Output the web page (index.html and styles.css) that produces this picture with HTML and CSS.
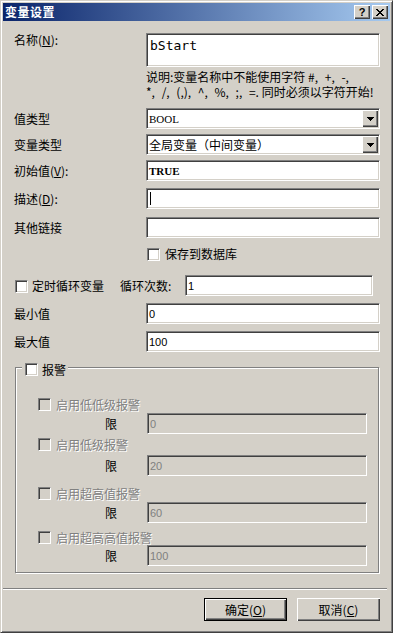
FILE: index.html
```html
<!DOCTYPE html>
<html lang="zh">
<head>
<meta charset="utf-8">
<title>变量设置</title>
<link rel="stylesheet" href="styles.css">
</head>
<body>
<div class="window">
  <div class="titlebar">
    <span class="title">变量设置</span>
    <div class="tbtns">
      <span class="tbtn help">?</span>
      <span class="tbtn close"><svg width="8" height="7" viewBox="0 0 8 7" shape-rendering="crispEdges"><path d="M0 0h2v1H0z M6 0h2v1H6z M1 1h2v1H1z M5 1h2v1H5z M2 2h4v1H2z M3 3h2v1H3z M2 4h4v1H2z M1 5h2v1H1z M5 5h2v1H5z M0 6h2v1H0z M6 6h2v1H6z" fill="#000"/></svg></span>
    </div>
  </div>
  <div class="client">
    <div class="row row-name">
      <span class="lbl">名称(<u>N</u>):</span>
      <div class="edit edit-name">bStart</div>
    </div>
    <div class="note">
      <div class="note-line">说明:变量名称中不能使用字符 <span class="ascii">#, +, -,</span></div>
      <div class="note-line"><span class="ascii">*, /, (,), ^, %, ;, =.</span> 同时必须以字符开始!</div>
    </div>

    <div class="row r-valtype">
      <span class="lbl">值类型</span>
      <div class="combo">
        <span class="combo-text serif">BOOL</span>
        <span class="combo-btn"><svg width="7" height="4" viewBox="0 0 7 4" shape-rendering="crispEdges"><path d="M0 0h7v1H0z M1 1h5v1H1z M2 2h3v1H2z M3 3h1v1H3z" fill="#000"/></svg></span>
      </div>
    </div>
    <div class="row r-vartype">
      <span class="lbl">变量类型</span>
      <div class="combo">
        <span class="combo-text">全局变量（中间变量）</span>
        <span class="combo-btn"><svg width="7" height="4" viewBox="0 0 7 4" shape-rendering="crispEdges"><path d="M0 0h7v1H0z M1 1h5v1H1z M2 2h3v1H2z M3 3h1v1H3z" fill="#000"/></svg></span>
      </div>
    </div>
    <div class="row r-init">
      <span class="lbl">初始值(<u>V</u>):</span>
      <div class="edit serif bold">TRUE</div>
    </div>
    <div class="row r-desc">
      <span class="lbl">描述(<u>D</u>):</span>
      <div class="edit"><span class="caret"></span></div>
    </div>
    <div class="row r-link">
      <span class="lbl">其他链接</span>
      <div class="edit"></div>
    </div>
    <div class="row r-save">
      <span class="cb"></span>
      <span class="cb-text">保存到数据库</span>
    </div>
    <div class="row r-timer">
      <span class="cb"></span>
      <span class="cb-text timer-text">定时循环变量</span>
      <span class="count-lbl">循环次数:</span>
      <div class="edit edit-count">1</div>
    </div>
    <div class="row r-min">
      <span class="lbl">最小值</span>
      <div class="edit">0</div>
    </div>
    <div class="row r-max">
      <span class="lbl">最大值</span>
      <div class="edit">100</div>
    </div>

    <div class="group">
      <div class="group-title">
        <span class="cb"></span>
        <span>报警</span>
      </div>
      <div class="g-check gc1"><span class="cb dis"></span><span class="dis-text">启用低低级报警</span></div>
      <div class="g-limit gl1"><span class="lim">限</span><div class="edit dis-edit">0</div></div>
      <div class="g-check gc2"><span class="cb dis"></span><span class="dis-text">启用低级报警</span></div>
      <div class="g-limit gl2"><span class="lim">限</span><div class="edit dis-edit">20</div></div>
      <div class="g-check gc3"><span class="cb dis"></span><span class="dis-text">启用超高值报警</span></div>
      <div class="g-limit gl3"><span class="lim">限</span><div class="edit dis-edit">60</div></div>
      <div class="g-check gc4"><span class="cb dis"></span><span class="dis-text">启用超高高值报警</span></div>
      <div class="g-limit gl4"><span class="lim">限</span><div class="edit dis-edit">100</div></div>
    </div>

    <div class="separator"></div>

    <div class="buttons">
      <span class="btn btn-default">确定(<u>O</u>)</span>
      <span class="btn">取消(<u>C</u>)</span>
    </div>
  </div>
</div>
</body>
</html>
```

FILE: styles.css
```css
* { box-sizing: border-box; }
html, body { margin: 0; padding: 0; }
body {
  width: 393px;
  height: 633px;
  overflow: hidden;
  background: #d4d0c8;
  font-family: "Noto Sans CJK SC", "Noto Sans", sans-serif;
  font-size: 12px;
  color: #000;
}
u { text-decoration: underline; text-underline-offset: 1px; }

.window {
  width: 393px;
  height: 633px;
  background: #d4d0c8;
  border: 1px solid;
  border-color: #d4d0c8 #404040 #404040 #d4d0c8;
  box-shadow: inset 1px 1px #fff, inset -1px -1px #808080;
  padding: 2px;
  display: flex;
  flex-direction: column;
}

.titlebar {
  height: 18px;
  flex: none;
  display: flex;
  align-items: center;
  justify-content: space-between;
  background: linear-gradient(to right, #0a246a 0%, #a6caf0 100%);
  padding: 0 2px 0 2px;
}
.title {
  color: #fff;
  font-weight: bold;
  font-size: 12px;
  line-height: 18px;
  letter-spacing: 0.5px;
}
.tbtns { display: flex; gap: 2px; }
.tbtn {
  width: 16px;
  height: 14px;
  background: #d4d0c8;
  box-shadow: inset 1px 1px #fff, inset -1px -1px #404040, inset -2px -2px #808080;
  display: flex;
  align-items: center;
  justify-content: center;
}
.help {
  font-family: "Liberation Sans", sans-serif;
  font-weight: bold;
  font-size: 11px;
  line-height: 14px;
}

.client {
  flex: 1;
  display: flex;
  flex-direction: column;
  padding: 0 10px 0 11px;
}

.row { display: flex; align-items: center; flex: none; }
.lbl { width: 132px; flex: none; line-height: 14px; }

.edit {
  width: 234px;
  height: 21px;
  flex: none;
  background: #fff;
  border: 1px solid;
  border-color: #808080 #fff #fff #808080;
  box-shadow: inset 1px 1px #404040, inset -1px -1px #d4d0c8;
  padding: 0 2px;
  display: flex;
  align-items: center;
  font-family: "Liberation Sans", sans-serif;
  font-size: 11px;
}
.serif { font-family: "Liberation Serif", serif; font-size: 11px; }
.bold { font-weight: bold; }
.caret { width: 1px; height: 13px; background: #000; margin-left: 1px; }

.row-name { margin-top: 12px; align-items: flex-start; }
.edit-name {
  height: 34px;
  align-items: flex-start;
  padding-top: 4px;
  padding-left: 3px;
  font-family: "DejaVu Sans Mono", monospace;
  font-size: 13px;
}

.note {
  margin-top: 2px;
  padding-left: 132px;
  display: flex;
  flex-direction: column;
  flex: none;
}
.note-line {
  height: 15px;
  line-height: 15px;
  white-space: nowrap;
  overflow: hidden;
}
.ascii { word-spacing: 4px; }

.combo {
  width: 234px;
  height: 21px;
  flex: none;
  display: flex;
  background: #fff;
  border: 1px solid;
  border-color: #808080 #fff #fff #808080;
  box-shadow: inset 1px 1px #404040, inset -1px -1px #d4d0c8;
  padding: 1px;
}
.combo-text { flex: 1; display: flex; align-items: center; padding-left: 1px; }
.combo-btn {
  width: 16px;
  height: 17px;
  flex: none;
  background: #d4d0c8;
  box-shadow: inset 1px 1px #fff, inset -1px -1px #404040, inset -2px -2px #808080;
  display: flex;
  align-items: center;
  justify-content: center;
  padding-top: 1px;
}

.r-valtype { margin-top: 9px; }
.r-vartype { margin-top: 5px; }
.r-init { margin-top: 5px; }
.r-desc { margin-top: 7px; }
.r-link { margin-top: 8px; }
.r-save { margin-top: 9px; padding-left: 133px; }
.r-timer { margin-top: 14px; }
.r-min { margin-top: 7px; }
.r-max { margin-top: 7px; }

.cb {
  width: 13px;
  height: 13px;
  flex: none;
  background: #fff;
  border: 1px solid;
  border-color: #808080 #fff #fff #808080;
  box-shadow: inset 1px 1px #404040, inset -1px -1px #d4d0c8;
}
.cb.dis { background: #d4d0c8; }
.cb-text { margin-left: 5px; line-height: 14px; }

.r-timer .cb { margin-left: 1px; margin-top: 2px; }
.timer-text { margin-left: 4px; width: 88px; }
.count-lbl { width: 65px; flex: none; }
.edit-count { width: 188px; }

.group {
  margin: 15px 0 0 1px;
  width: 364px;
  flex: none;
  border: 1px solid #808080;
  box-shadow: inset 1px 1px #fff, 1px 1px #fff;
  display: flex;
  flex-direction: column;
  padding-bottom: 6px;
}
.group-title {
  align-self: flex-start;
  margin: -7px 0 0 6px;
  padding: 0 2px 0 3px;
  height: 16px;
  background: #d4d0c8;
  display: flex;
  align-items: center;
  gap: 4px;
}
.g-check {
  display: flex;
  align-items: center;
  gap: 5px;
  padding-left: 22px;
  height: 13px;
}
.dis-text { color: #808080; text-shadow: 1px 1px 0 #fff; line-height: 13px; }
.g-limit { display: flex; align-items: center; }
.lim { width: 131px; padding-left: 89px; flex: none; }
.dis-edit { width: 220px; background: #d4d0c8; color: #808080; }

.gc1 { margin-top: 21px; }
.gl1 { margin-top: 2px; }
.gc2 { margin-top: 4px; }
.gl2 { margin-top: 4px; }
.gc3 { margin-top: 11px; }
.gl3 { margin-top: 2px; }
.gc4 { margin-top: 8px; }
.gl4 { margin-top: 1px; }

.separator {
  margin: 15px -7px 0 -11px;
  height: 2px;
  flex: none;
  border-top: 1px solid #808080;
  border-bottom: 1px solid #fff;
}

.buttons {
  margin-top: 8px;
  display: flex;
  justify-content: flex-end;
  gap: 10px;
}
.btn {
  width: 83px;
  height: 23px;
  display: flex;
  align-items: center;
  justify-content: center;
  background: #d4d0c8;
  box-shadow: inset 1px 1px #fff, inset -1px -1px #404040, inset -2px -2px #808080;
}
.btn-default {
  border: 1px solid #000;
  box-shadow: inset 1px 1px #fff, inset -1px -1px #404040, inset -2px -2px #808080;
}
```
